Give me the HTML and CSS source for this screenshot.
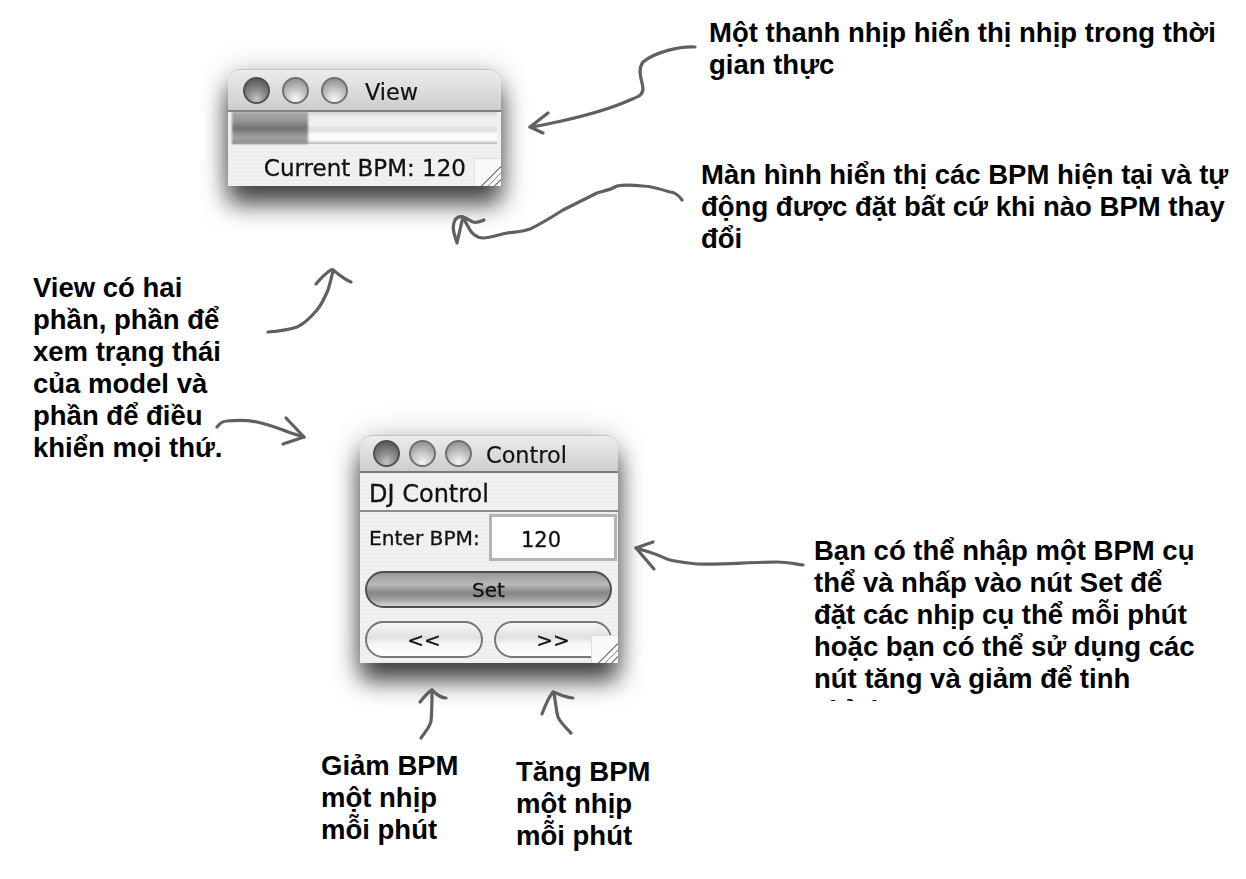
FILE: index.html
```html
<!DOCTYPE html>
<html lang="vi">
<head>
    <meta charset="UTF-8">
    <meta name="viewport" content="width=device-width, initial-scale=1.0">
    <title>View và Control</title>
    <link rel="stylesheet" href="styles.css">
</head>
<body>
    <main class="canvas">
        <section class="win win-view">
            <header class="titlebar">
                <span class="lights">
                    <i class="light light-dark"></i>
                    <i class="light"></i>
                    <i class="light"></i>
                </span>
                <span class="win-title">View</span>
            </header>
            <div class="beat-bar"><div class="beat-fill"></div></div>
            <div class="status-row">Current BPM: 120</div>
            <div class="grip"></div>
        </section>

        <section class="win win-control">
            <header class="titlebar">
                <span class="lights">
                    <i class="light light-dark"></i>
                    <i class="light"></i>
                    <i class="light"></i>
                </span>
                <span class="win-title">Control</span>
            </header>
            <div class="dj-row">DJ Control</div>
            <div class="bpm-row">
                <span class="bpm-label">Enter BPM:</span>
                <span class="bpm-input">120</span>
            </div>
            <div class="set-row"><button class="pill pill-set">Set</button></div>
            <div class="step-row">
                <button class="pill">&lt;&lt;</button>
                <button class="pill">&gt;&gt;</button>
            </div>
            <div class="grip"></div>
        </section>

        <svg class="arrows" width="1246" height="879" viewBox="0 0 1246 879" fill="none">
            <!-- top right, to the beat bar -->
            <path d="M695 47C680 46 655 52 643 62C637 70 642 80 643 88C643 96 637 97 630 100C610 109 580 117 557 122C548 124 540 126 530 127"/>
            <path d="M548 113L530 127L543 133"/>
            <!-- to the current BPM row -->
            <path d="M682 200C677 193 672 192 670 192C660 189 650 186 643 186C632 185 622 185 617 186C610 190 604 191 597 193C585 199 575 204 563 210C552 217 541 224 530 229C522 232 515 232 507 233C498 235 490 238 483 238C476 238 471 232 470 230C467 225 465 221 463 217"/>
            <path d="M484 220C480 222 477 223 473 222C470 221 467 218 463 217C460 216 457 217 455 220C453 224 453 229 454 233C455 237 456 240 457 243C458 238 459 234 460 230C461 225 462 221 463 217"/>
            <!-- left note, up to the view -->
            <path d="M268 332C280 331 289 330 297 327C304 324 311 317 317 310C322 304 325 297 328 290C330 283 332 277 333 270"/>
            <path d="M316 284C320 279 324 275 328 272C330 270 332 269 333 270C338 274 345 280 351 282"/>
            <!-- left note, down to the control -->
            <path d="M217 427C220 423 224 421 227 421C237 420 247 420 257 422C266 424 275 427 283 430C290 433 297 435 304 437"/>
            <path d="M286 418L304 437L283 444"/>
            <!-- right note, to the text field -->
            <path d="M803 565C795 564 786 562 777 562C750 562 722 565 697 564C687 563 678 562 670 560C666 559 663 557 660 556C653 553 645 551 636 548"/>
            <path d="M653 542L636 548L654 569"/>
            <!-- under the step buttons -->
            <path d="M421 738C425 732 430 727 431 721C432 712 432 700 432 690"/>
            <path d="M420 702C424 697 428 692 432 690C436 694 441 698 446 698"/>
            <path d="M571 733C565 727 560 722 558 717C556 710 556 705 555 700C555 697 554 694 553 692"/>
            <path d="M542 714C545 706 548 698 553 692C559 694 566 698 573 698"/>
        </svg>

        <p class="note note-bar">Một thanh nhịp hiển thị nhịp trong thời gian thực</p>
        <p class="note note-screen">Màn hình hiển thị các BPM hiện tại và tự động được đặt bất cứ khi nào BPM thay đổi</p>
        <p class="note note-view">View có hai phần, phần để xem trạng thái của model và phần để điều khiển mọi thứ.</p>
        <p class="note note-set">Bạn có thể nhập một BPM cụ thể và nhấp vào nút Set để đặt các nhịp cụ thể mỗi phút hoặc bạn có thể sử dụng các nút tăng và giảm để tinh chỉnh</p>
        <p class="note note-down">Giảm BPM một nhịp mỗi phút</p>
        <p class="note note-up">Tăng BPM một nhịp mỗi phút</p>
    </main>
</body>
</html>
```

FILE: styles.css
```css
html, body {
    margin: 0;
    background: #fff;
}
.canvas {
    position: relative;
    width: 1246px;
    height: 879px;
    overflow: hidden;
}

/* notes */
.note {
    position: absolute;
    margin: 0;
    font-family: "Liberation Sans", Arial, sans-serif;
    font-weight: bold;
    font-size: 27.5px;
    line-height: 32px;
    color: #000;
}
.note-bar { left: 709px; top: 17px; width: 530px; }
.note-screen { left: 701px; top: 159px; width: 540px; }
.note-view { left: 33px; top: 272px; width: 200px; }
.note-set { left: 814px; top: 535px; width: 392px; height: 166px; overflow: hidden; }
.note-down { left: 321px; top: 750px; width: 150px; }
.note-up { left: 516px; top: 756px; width: 150px; }

.arrows {
    position: absolute;
    left: 0;
    top: 0;
}
.arrows path {
    stroke: #606060;
    stroke-width: 3.2;
    stroke-linecap: round;
    stroke-linejoin: round;
}

/* mac windows */
.win {
    position: absolute;
    display: flex;
    flex-direction: column;
    box-sizing: border-box;
    border-radius: 12px 12px 0 0;
    background: repeating-linear-gradient(#f1f1f1 0, #f1f1f1 2px, #eeeeee 2px, #eeeeee 4px);
    box-shadow: 0 18px 24px 0 rgba(0, 0, 0, 0.72), 0 0 30px rgba(0, 0, 0, 0.2);
    font-family: "DejaVu Sans", sans-serif;
    color: #111;
    filter: blur(0.5px);
    -webkit-text-stroke: 0.3px #111;
}
.win-view { left: 228px; top: 69px; width: 273px; height: 117px; }
.win-control { left: 360px; top: 435px; width: 258px; height: 228px; }

.titlebar {
    display: flex;
    align-items: center;
    box-sizing: border-box;
    border-radius: 12px 12px 0 0;
    border-top: 1px solid #c4c4c4;
    border-bottom: 2px solid #7d7d7d;
    background: linear-gradient(#ececec, #cdcdcd);
}
.win-view .titlebar { height: 43px; padding-left: 15px; }
.win-control .titlebar { height: 38px; padding-left: 13px; }

.lights { display: flex; }
.win-view .lights { gap: 12px; }
.win-control .lights { gap: 9px; }
.light {
    display: block;
    width: 27px;
    height: 27px;
    box-sizing: border-box;
    border-radius: 50%;
    border: 2px solid #707070;
    background: radial-gradient(circle at 50% 88%, #f6f6f6 0, #cfcfcf 35%, #a6a6a6 70%, #858585 100%);
}
.light-dark {
    border-color: #505050;
    background: radial-gradient(circle at 50% 88%, #c4c4c4 0, #8d8d8d 40%, #666 75%, #4c4c4c 100%);
}
.win-title {
    padding-top: 3px;
    font-size: 22.4px;
    -webkit-text-stroke: 0.2px #111;
}
.win-view .win-title { margin-left: 17px; }
.win-control .win-title { margin-left: 14px; }

.beat-bar {
    height: 32px;
    margin: 0 4px;
    background: linear-gradient(#d4d4d4, #ececec 15%, #f2f2f2 40%, #e2e2e2 50%, #e4e4e4 62%, #fbfbfb 68%, #fbfbfb 88%, #b4b4b4);
}
.beat-fill {
    width: 76px;
    height: 100%;
    background: linear-gradient(#a8a8a8, #9a9a9a 25%, #717171 50%, #a4a4a4 80%, #8a8a8a);
    filter: blur(1px);
}
.status-row {
    flex: 1;
    display: flex;
    align-items: center;
    justify-content: flex-end;
    padding: 6px 35px 0 0;
    font-size: 23px;
}

.grip {
    position: absolute;
    right: 0;
    bottom: 0;
    width: 27px;
    height: 28px;
    box-sizing: border-box;
    border-left: 1px solid #dcdcdc;
    border-top: 1px solid #dcdcdc;
    background: linear-gradient(135deg, #f8f8f8 62%, #8c8c8c 62%, #8c8c8c 65%, #f8f8f8 65%, #f8f8f8 74%, #8c8c8c 74%, #8c8c8c 77%, #f8f8f8 77%, #f8f8f8 86%, #8c8c8c 86%, #8c8c8c 89%, #f8f8f8 89%);
}

.dj-row {
    height: 39px;
    box-sizing: border-box;
    padding-left: 9px;
    border-bottom: 2px solid #8c8c8c;
    font-size: 24px;
    line-height: 43px;
}
.bpm-row {
    display: flex;
    align-items: center;
    height: 52px;
}
.bpm-label {
    width: 129px;
    box-sizing: border-box;
    padding-left: 9px;
    font-size: 20.2px;
}
.bpm-input {
    width: 128px;
    height: 47px;
    box-sizing: border-box;
    margin-bottom: 2px;
    padding-left: 29px;
    border: 3px solid #b4b4b4;
    background: #fff;
    font-size: 21px;
    line-height: 46px;
}
.pill {
    display: block;
    box-sizing: border-box;
    width: 118px;
    height: 37px;
    padding: 0;
    border: 2px solid #777;
    border-radius: 19px;
    background: linear-gradient(#f6f6f6, #e0e0e0 45%, #f4f4f4 60%, #fff);
    color: #111;
    font-family: "DejaVu Sans", sans-serif;
    font-size: 20px;
    -webkit-text-stroke: 0.3px #111;
}
.pill-set {
    width: 247px;
    border-color: #505050;
    background: linear-gradient(#989898, #b9b9b9 35%, #868686 60%, #9f9f9f 80%, #d6d6d6);
}
.set-row {
    padding: 7px 0 0 5px;
}
.step-row {
    display: flex;
    gap: 11px;
    padding: 13px 0 0 5px;
}
```
